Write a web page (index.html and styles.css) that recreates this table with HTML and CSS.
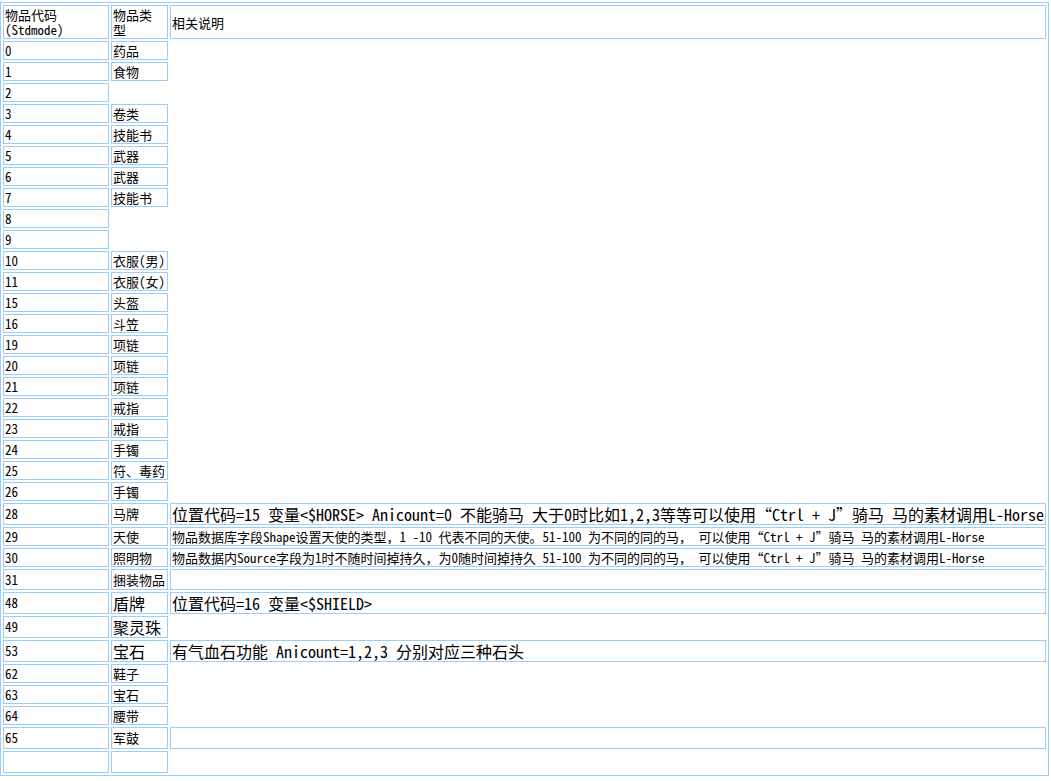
FILE: index.html
```html
<!DOCTYPE html>
<html lang="zh">
<head>
<meta charset="utf-8">
<title>物品代码</title>
<link rel="stylesheet" href="styles.css">
</head>
<body>
<table class="grid">
  <colgroup>
    <col class="c1">
    <col class="c2">
    <col class="c3">
  </colgroup>
  <tr class="head">
    <td>物品代码<br>(Stdmode)</td>
    <td>物品类<br>型</td>
    <td>相关说明</td>
  </tr>
  <tr><td>0</td><td>药品</td></tr>
  <tr><td>1</td><td>食物</td></tr>
  <tr><td>2</td></tr>
  <tr><td>3</td><td>卷类</td></tr>
  <tr><td>4</td><td>技能书</td></tr>
  <tr><td>5</td><td>武器</td></tr>
  <tr><td>6</td><td>武器</td></tr>
  <tr><td>7</td><td>技能书</td></tr>
  <tr><td>8</td></tr>
  <tr><td>9</td></tr>
  <tr><td>10</td><td>衣服(男)</td></tr>
  <tr><td>11</td><td>衣服(女)</td></tr>
  <tr><td>15</td><td>头盔</td></tr>
  <tr><td>16</td><td>斗笠</td></tr>
  <tr><td>19</td><td>项链</td></tr>
  <tr><td>20</td><td>项链</td></tr>
  <tr><td>21</td><td>项链</td></tr>
  <tr><td>22</td><td>戒指</td></tr>
  <tr><td>23</td><td>戒指</td></tr>
  <tr><td>24</td><td>手镯</td></tr>
  <tr><td>25</td><td>符、毒药</td></tr>
  <tr><td>26</td><td>手镯</td></tr>
  <tr class="big"><td>28</td><td>马牌</td><td class="lg">位置代码=15 变量&lt;$HORSE&gt; Anicount=0 不能骑马 大于0时比如1,2,3等等可以使用“Ctrl + J”骑马 马的素材调用L-Horse</td></tr>
  <tr><td>29</td><td>天使</td><td>物品数据库字段Shape设置天使的类型，1 -10 代表不同的天使。51-100 为不同的同的马， 可以使用“Ctrl + J”骑马 马的素材调用L-Horse</td></tr>
  <tr><td>30</td><td>照明物</td><td>物品数据内Source字段为1时不随时间掉持久，为0随时间掉持久 51-100 为不同的同的马， 可以使用“Ctrl + J”骑马 马的素材调用L-Horse</td></tr>
  <tr class="mid"><td>31</td><td>捆装物品</td><td>&nbsp;</td></tr>
  <tr class="big"><td>48</td><td class="lg">盾牌</td><td class="lg">位置代码=16 变量&lt;$SHIELD&gt;</td></tr>
  <tr class="big"><td>49</td><td class="lg">聚灵珠</td></tr>
  <tr class="big"><td>53</td><td class="lg">宝石</td><td class="lg">有气血石功能 Anicount=1,2,3 分别对应三种石头</td></tr>
  <tr><td>62</td><td>鞋子</td></tr>
  <tr><td>63</td><td>宝石</td></tr>
  <tr><td>64</td><td>腰带</td></tr>
  <tr class="big"><td>65</td><td>军鼓</td><td>&nbsp;</td></tr>
  <tr class="big"><td>&nbsp;</td><td>&nbsp;</td></tr>
</table>
</body>
</html>
```
FILE: styles.css
```css
html, body {
  margin: 0;
  padding: 0;
  background: #ffffff;
}

body {
  font-family: "Noto Sans Mono CJK SC", "Noto Sans CJK SC", monospace;
  font-size: 13px;
  color: #000000;
}

.grid {
  margin-top: 2px;
  width: 1049px;
  box-sizing: border-box;
  table-layout: fixed;
  border-collapse: separate;
  border-spacing: 2px;
  border: 1px solid #99ccff;
}

.c1 { width: 106px; }
.c2 { width: 57px; }
.c3 { width: 876px; }

.grid td {
  border: 1px solid #99ccff;
  padding: 1px;
  line-height: 15px;
  vertical-align: middle;
  white-space: nowrap;
  overflow: hidden;
}

.grid tr.big td {
  line-height: 18px;
}

.grid tr.mid td {
  line-height: 17px;
}

.grid td.lg {
  font-size: 16px;
}
```
